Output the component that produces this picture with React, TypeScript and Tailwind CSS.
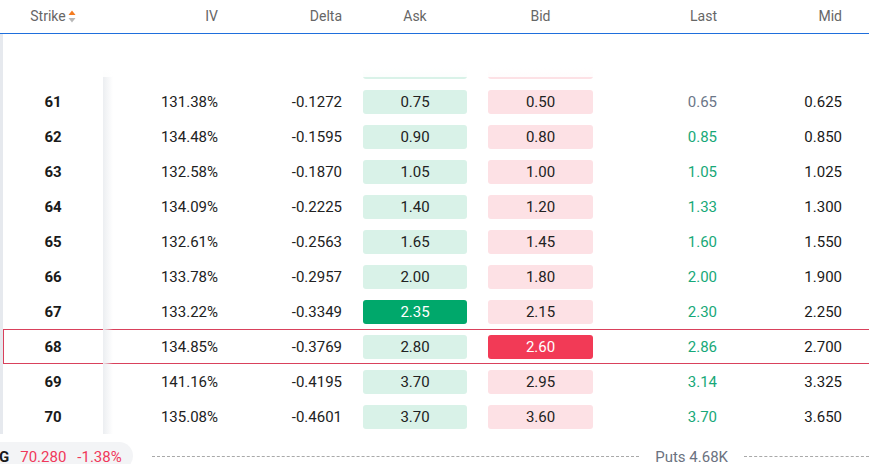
// Option chain (puts side) — strike rows with ask/bid chips and a footer ticker.
type Row = {
  strike: number
  iv: string
  delta: string
  ask: string
  bid: string
  last: string
  mid: string
  lastUp?: boolean
  askHot?: boolean
  bidHot?: boolean
  selected?: boolean
  ghost?: boolean
}

const ROWS: Row[] = [
  // row scrolled under the header: only the chip edges peek out
  { strike: 60, iv: '', delta: '', ask: '', bid: '', last: '', mid: '', ghost: true },
  { strike: 61, iv: '131.38%', delta: '-0.1272', ask: '0.75', bid: '0.50', last: '0.65', mid: '0.625' },
  { strike: 62, iv: '134.48%', delta: '-0.1595', ask: '0.90', bid: '0.80', last: '0.85', mid: '0.850', lastUp: true },
  { strike: 63, iv: '132.58%', delta: '-0.1870', ask: '1.05', bid: '1.00', last: '1.05', mid: '1.025', lastUp: true },
  { strike: 64, iv: '134.09%', delta: '-0.2225', ask: '1.40', bid: '1.20', last: '1.33', mid: '1.300', lastUp: true },
  { strike: 65, iv: '132.61%', delta: '-0.2563', ask: '1.65', bid: '1.45', last: '1.60', mid: '1.550', lastUp: true },
  { strike: 66, iv: '133.78%', delta: '-0.2957', ask: '2.00', bid: '1.80', last: '2.00', mid: '1.900', lastUp: true },
  { strike: 67, iv: '133.22%', delta: '-0.3349', ask: '2.35', bid: '2.15', last: '2.30', mid: '2.250', lastUp: true, askHot: true },
  { strike: 68, iv: '134.85%', delta: '-0.3769', ask: '2.80', bid: '2.60', last: '2.86', mid: '2.700', lastUp: true, bidHot: true, selected: true },
  { strike: 69, iv: '141.16%', delta: '-0.4195', ask: '3.70', bid: '2.95', last: '3.14', mid: '3.325', lastUp: true },
  { strike: 70, iv: '135.08%', delta: '-0.4601', ask: '3.70', bid: '3.60', last: '3.70', mid: '3.650', lastUp: true },
]

function SortIcon() {
  return (
    <svg width="8" height="13" viewBox="0 0 8 13" className="ml-[2px]">
      <path d="M4 0.5 L7.5 5 H0.5 Z" fill="#f47b20" />
      <path d="M4 12.5 L7.5 8 H0.5 Z" fill="#b8b8b8" />
    </svg>
  )
}

function Header() {
  return (
    <div className="flex h-[34px] items-center border-b border-[#1f6fdc] pb-[1px] text-[14px] text-[#666]">
      <div className="flex w-[103px] items-center justify-center pl-[3px]">
        Strike
        <SortIcon />
      </div>
      <div className="w-[115px] text-right">IV</div>
      <div className="w-[124px] text-right">Delta</div>
      <div className="w-[125px] pl-[21px] text-center">Ask</div>
      <div className="w-[126px] pl-[21px] text-center">Bid</div>
      <div className="w-[124px] text-right">Last</div>
      <div className="w-[125px] text-right">Mid</div>
    </div>
  )
}

function ChainRow({ r }: { r: Row }) {
  return (
    <div
      className={`flex h-[35px] w-[900px] items-center text-[15px] text-[#222] ${
        r.selected ? 'outline-1 -outline-offset-1 outline-[#d9415c]' : ''
      }`}
    >
      <div className="w-[100px] pt-[2px] text-center font-bold text-[#1a1a1a]">{r.ghost ? '' : r.strike}</div>
      <div className="w-[115px] pt-[2px] text-right">{r.iv}</div>
      <div className="w-[124px] pt-[2px] text-right">{r.delta}</div>
      <div className="w-[125px] pl-[21px]">
        <div
          className={`flex h-6 items-center justify-center rounded-[3px] pt-[2px] ${
            r.askHot ? 'bg-[#00a86b] text-white' : 'bg-[#d9f2e8]'
          }`}
        >
          {r.ask}
        </div>
      </div>
      <div className="w-[126px] pl-[21px]">
        <div
          className={`flex h-6 items-center justify-center rounded-[3px] pt-[2px] ${
            r.bidHot ? 'bg-[#f23a56] text-white' : 'bg-[#fde1e5]'
          }`}
        >
          {r.bid}
        </div>
      </div>
      <div className={`w-[124px] pt-[2px] text-right ${r.lastUp ? 'text-[#17a878]' : 'text-[#6b7688]'}`}>
        {r.last}
      </div>
      <div className="w-[125px] pt-[2px] text-right text-[#1a1a1a]">{r.mid}</div>
    </div>
  )
}

export default function App() {
  return (
    <div className="relative h-[464px] w-[869px] overflow-hidden bg-white font-['Roboto','Liberation_Sans',sans-serif]">
      <Header />

      <div className="relative h-[400px] overflow-hidden border-l-[3px] border-[#e6e9ee]">
        <div className="mt-[15px]">
          {ROWS.map((r) => (
            <ChainRow key={r.strike} r={r} />
          ))}
        </div>
        {/* sticky strike column shadow */}
        <div className="pointer-events-none absolute top-0 bottom-0 left-[100px] w-[10px] bg-gradient-to-r from-[#eceef1] to-transparent" />
        {/* faded rows under the header */}
        <div className="pointer-events-none absolute top-0 left-[-3px] h-[43px] w-[900px] bg-gradient-to-b from-white from-80% to-white/90" />
      </div>

      <div className="mt-[8px] flex h-[28px] items-center text-[15px]">
        <div className="-ml-[1px] flex h-full w-[134px] items-center gap-[11px] rounded-r-full bg-[#f3f4f6] pt-[2px]">
          <span className="font-bold text-[#1a1a1a]">G</span>
          <span className="text-[#f0385a]">70.280</span>
          <span className="text-[#f0385a]">-1.38%</span>
        </div>
        <div className="ml-[19px] flex-1 border-t border-dashed border-[#a9a9a9]" />
        <span className="px-[16px] pt-[2px] text-[#6b7280]">Puts 4.68K</span>
        <div className="w-[125px] border-t border-dashed border-[#a9a9a9]" />
      </div>
    </div>
  )
}
